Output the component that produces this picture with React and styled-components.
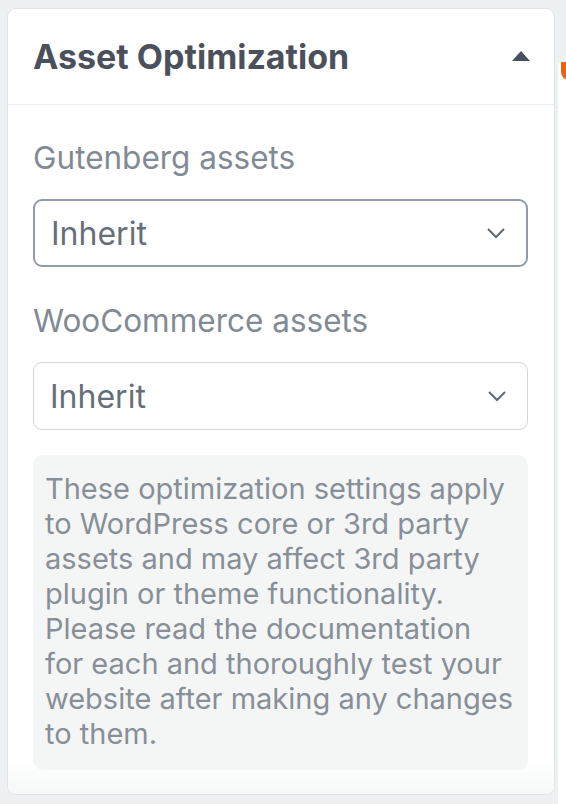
import styled, { createGlobalStyle } from 'styled-components'

const GlobalStyle = createGlobalStyle`
    html, body {
        margin: 0;
        background: #eef1f1;
        font-family: Inter, 'Noto Sans', sans-serif;
    }
`

const Page = styled.div`
    display: flex;
    align-items: flex-start;
    width: 566px;
    height: 804px;
    overflow: hidden;
    padding: 8px 0 0 7px;
    box-sizing: border-box;
    gap: 3px;
`

const Card = styled.div`
    flex: none;
    width: 548px;
    height: 787px;
    box-sizing: border-box;
    background: #ffffff;
    border: 1.5px solid #dfe5e7;
    border-radius: 9px;
    display: flex;
    flex-direction: column;
    overflow: hidden;
`

const Header = styled.div`
    height: 95px;
    flex: none;
    display: flex;
    align-items: center;
    justify-content: space-between;
    padding: 0 24px 0 25px;
    border-bottom: 1.5px solid #e9edef;
`

const Title = styled.h2`
    margin: 0;
    font-size: 34px;
    font-weight: 700;
    color: #4b515c;
`

const Caret = styled.span`
    width: 0;
    height: 0;
    border-left: 9px solid transparent;
    border-right: 9px solid transparent;
    border-bottom: 10px solid #4b515c;
    margin-bottom: 2px;
`

const Body = styled.div`
    flex: 1;
    padding: 34px 26px 25px 25px;
    display: flex;
    flex-direction: column;
    background: linear-gradient(to bottom, #ffffff 95%, #f6f8f8 100%);
`

const Label = styled.label`
    font-size: 31.5px;
    line-height: 38px;
    color: #818b95;
    margin-bottom: ${(p) => p.$gap || 24}px;
`

const Select = styled.div`
    height: 68px;
    flex: none;
    box-sizing: border-box;
    border: ${(p) => (p.$focused ? '2px solid #8f9cab' : '1.5px solid #d0d6db')};
    border-radius: 9px;
    display: flex;
    align-items: center;
    justify-content: space-between;
    padding: 0 20px 0 16px;
    font-size: 32px;
    color: #666f79;
    margin-bottom: ${(p) => p.$gap || 0}px;
`

const Notice = styled.p`
    margin: 0;
    background: #f4f6f6;
    border-radius: 10px;
    padding: 16px 12px 19px 12px;
    font-size: 29px;
    line-height: 35px;
    color: #878f98;
`

const Side = styled.div`
    margin-top: 54px;
    width: 20px;
    height: 750px;
    background: #ffffff;
    position: relative;
`

const Badge = styled.span`
    position: absolute;
    left: 3px;
    top: 0;
    width: 14px;
    height: 18px;
    background: #f2600c;
    border-radius: 0 0 0 8px;
`

function Chevron() {
    return (
        <svg width="20" height="12" viewBox="0 0 20 12">
            <polyline points="2,2 10,10 18,2" fill="none" stroke="#5f6873" strokeWidth="2" />
        </svg>
    )
}

export default function App() {
    return (
        <>
            <GlobalStyle />
            <Page>
                <Card>
                    <Header>
                        <Title>Asset Optimization</Title>
                        <Caret />
                    </Header>
                    <Body>
                        <Label $gap={22}>Gutenberg assets</Label>
                        <Select $focused $gap={35}>
                            Inherit
                            <Chevron />
                        </Select>
                        <Label $gap={22}>WooCommerce assets</Label>
                        <Select $gap={25}>
                            Inherit
                            <Chevron />
                        </Select>
                        <Notice>
                            These optimization settings apply to WordPress core or 3rd party assets and may affect 3rd
                            party plugin or theme functionality. Please read the documentation for each and thoroughly
                            test your website after making any changes to them.
                        </Notice>
                    </Body>
                </Card>
                <Side>
                    <Badge />
                </Side>
            </Page>
        </>
    )
}
